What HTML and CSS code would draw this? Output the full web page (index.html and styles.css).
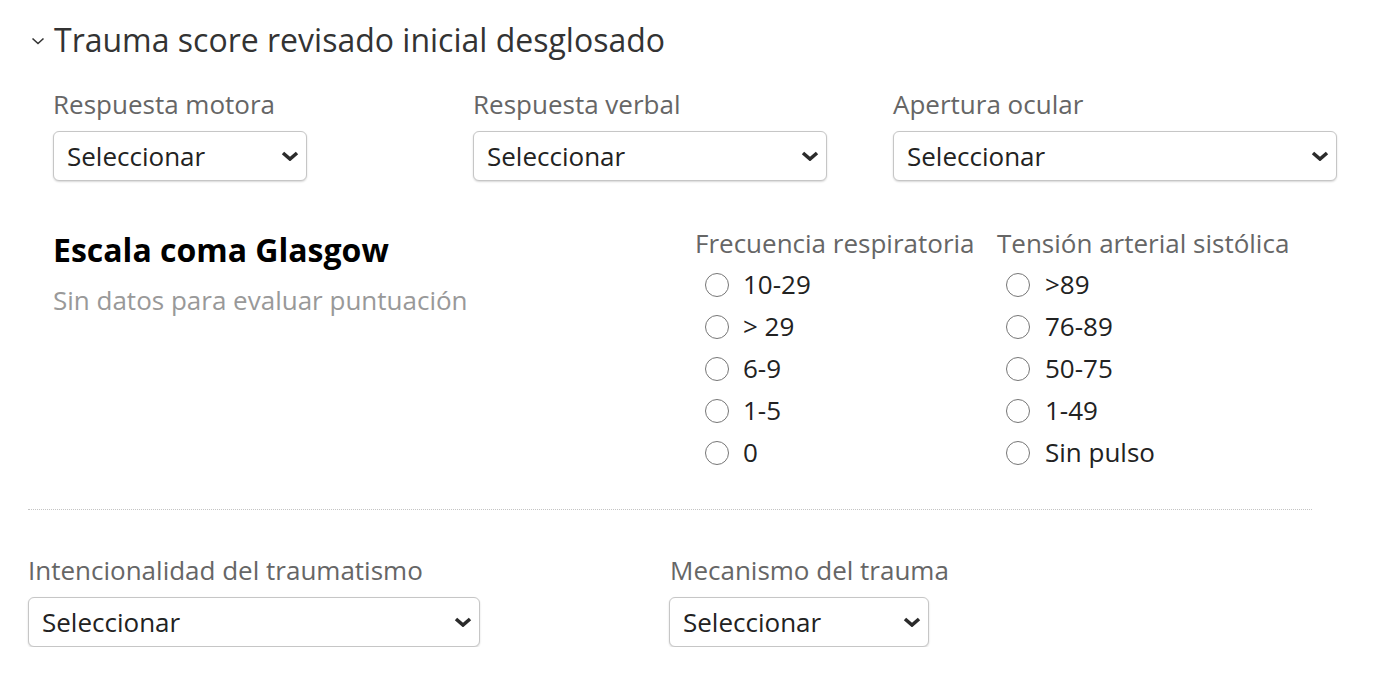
FILE: index.html
```html
<!DOCTYPE html>
<html lang="es">
<head>
<meta charset="utf-8">
<title>Trauma score</title>
<link rel="stylesheet" href="styles.css">
</head>
<body>
<div class="page">
  <h2 class="section-title">
    <svg class="title-chevron" width="14" height="8" viewBox="0 0 14 8"><path d="M1.5 1.5 L7 6.5 L12.5 1.5" fill="none" stroke="#333" stroke-width="1.6"/></svg>
    <span>Trauma score revisado inicial desglosado</span>
  </h2>

  <div class="inner">
    <div class="field-row">
      <div class="field col-420">
        <div class="label">Respuesta motora</div>
        <div class="select w-254"><span>Seleccionar</span><svg class="sel-chev" width="18" height="10" viewBox="0 0 18 10"><path d="M2 2 L9 8 L16 2" fill="none" stroke="#2b2b2b" stroke-width="3.6"/></svg></div>
      </div>
      <div class="field col-420">
        <div class="label">Respuesta verbal</div>
        <div class="select w-354"><span>Seleccionar</span><svg class="sel-chev" width="18" height="10" viewBox="0 0 18 10"><path d="M2 2 L9 8 L16 2" fill="none" stroke="#2b2b2b" stroke-width="3.6"/></svg></div>
      </div>
      <div class="field">
        <div class="label">Apertura ocular</div>
        <div class="select w-444"><span>Seleccionar</span><svg class="sel-chev" width="18" height="10" viewBox="0 0 18 10"><path d="M2 2 L9 8 L16 2" fill="none" stroke="#2b2b2b" stroke-width="3.6"/></svg></div>
      </div>
    </div>

    <div class="score-row">
      <div class="glasgow">
        <div class="glasgow-title">Escala coma Glasgow</div>
        <div class="glasgow-sub">Sin datos para evaluar puntuación</div>
      </div>
      <div class="radio-group rg-1">
        <div class="label">Frecuencia respiratoria</div>
        <div class="radio"><span class="circle"></span><span>10-29</span></div>
        <div class="radio"><span class="circle"></span><span>&gt; 29</span></div>
        <div class="radio"><span class="circle"></span><span>6-9</span></div>
        <div class="radio"><span class="circle"></span><span>1-5</span></div>
        <div class="radio"><span class="circle"></span><span>0</span></div>
      </div>
      <div class="radio-group rg-2">
        <div class="label">Tensión arterial sistólica</div>
        <div class="radio"><span class="circle"></span><span>&gt;89</span></div>
        <div class="radio"><span class="circle"></span><span>76-89</span></div>
        <div class="radio"><span class="circle"></span><span>50-75</span></div>
        <div class="radio"><span class="circle"></span><span>1-49</span></div>
        <div class="radio"><span class="circle"></span><span>Sin pulso</span></div>
      </div>
    </div>
  </div>

  <hr class="divider">

  <div class="field-row bottom-row">
    <div class="field col-643">
      <div class="label">Intencionalidad del traumatismo</div>
      <div class="select w-452"><span>Seleccionar</span><svg class="sel-chev" width="18" height="10" viewBox="0 0 18 10"><path d="M2 2 L9 8 L16 2" fill="none" stroke="#2b2b2b" stroke-width="3.6"/></svg></div>
    </div>
    <div class="field">
      <div class="label">Mecanismo del trauma</div>
      <div class="select w-260 shift"><span>Seleccionar</span><svg class="sel-chev" width="18" height="10" viewBox="0 0 18 10"><path d="M2 2 L9 8 L16 2" fill="none" stroke="#2b2b2b" stroke-width="3.6"/></svg></div>
    </div>
  </div>
</div>
</body>
</html>
```

FILE: styles.css
```css
* { box-sizing: border-box; }
html, body { margin: 0; padding: 0; background: #fff; }
body {
  font-family: "Open Sans", "Noto Sans", "Liberation Sans", sans-serif;
  color: #222;
}
.page { padding: 19px 0 0 28px; }

.section-title {
  margin: 0;
  display: flex;
  align-items: center;
  font-weight: 400;
  font-size: 32px;
  line-height: 42px;
  color: #333;
  height: 42px;
}
.title-chevron { margin: 2px 9px 0 3px; flex: none; }

.inner { padding-left: 25px; }

.field-row { display: flex; margin-top: 25px; }
.field { display: flex; flex-direction: column; }
.col-420 { width: 420px; }
.col-643 { width: 642px; }

.label {
  font-size: 26px;
  line-height: 36px;
  color: #666;
  white-space: nowrap;
}
.field .label { margin-bottom: 9px; }

.select {
  height: 50px;
  border: 1.5px solid #c6c6c6;
  border-radius: 6px;
  box-shadow: 0 1px 2px rgba(0,0,0,0.16);
  display: flex;
  align-items: center;
  justify-content: space-between;
  padding: 0 7px 0 13px;
  font-size: 26px;
  color: #222;
  background: #fff;
}
.sel-chev { flex: none; margin-top: 0; }
.w-254 { width: 254px; }
.w-354 { width: 354px; }
.w-444 { width: 444px; }
.w-452 { width: 452px; }
.w-260 { width: 260px; }
.shift { margin-left: -1px; }

.score-row { display: flex; margin-top: 44px; }
.glasgow { width: 642px; padding-top: 5px; }
.glasgow-title {
  font-weight: 700;
  font-size: 32px;
  line-height: 40px;
  color: #000;
}
.glasgow-sub {
  margin-top: 12px;
  font-size: 26px;
  line-height: 36px;
  color: #999;
}

.radio-group { display: flex; flex-direction: column; }
.rg-1 { width: 302px; }
.rg-1 .radio { padding-left: 10px; }
.rg-2 .radio { padding-left: 9px; }
.radio-group .label { margin-bottom: 2px; }
.radio {
  display: flex;
  align-items: center;
  height: 42px;
  font-size: 26px;
  color: #222;
}
.circle {
  width: 24px;
  height: 24px;
  border: 1.5px solid #767676;
  border-radius: 50%;
  margin-right: 14px;
  flex: none;
  margin-top: 2px;
}
.rg-2 .circle { margin-right: 15px; }

.divider {
  margin: 36px 0 0 0;
  width: 1284px;
  border: 0;
  border-top: 1.5px dotted #c4c4c4;
  height: 0;
}

.bottom-row { margin-top: 42px; }
.bottom-row .field .label { margin-bottom: 9px; }
```
